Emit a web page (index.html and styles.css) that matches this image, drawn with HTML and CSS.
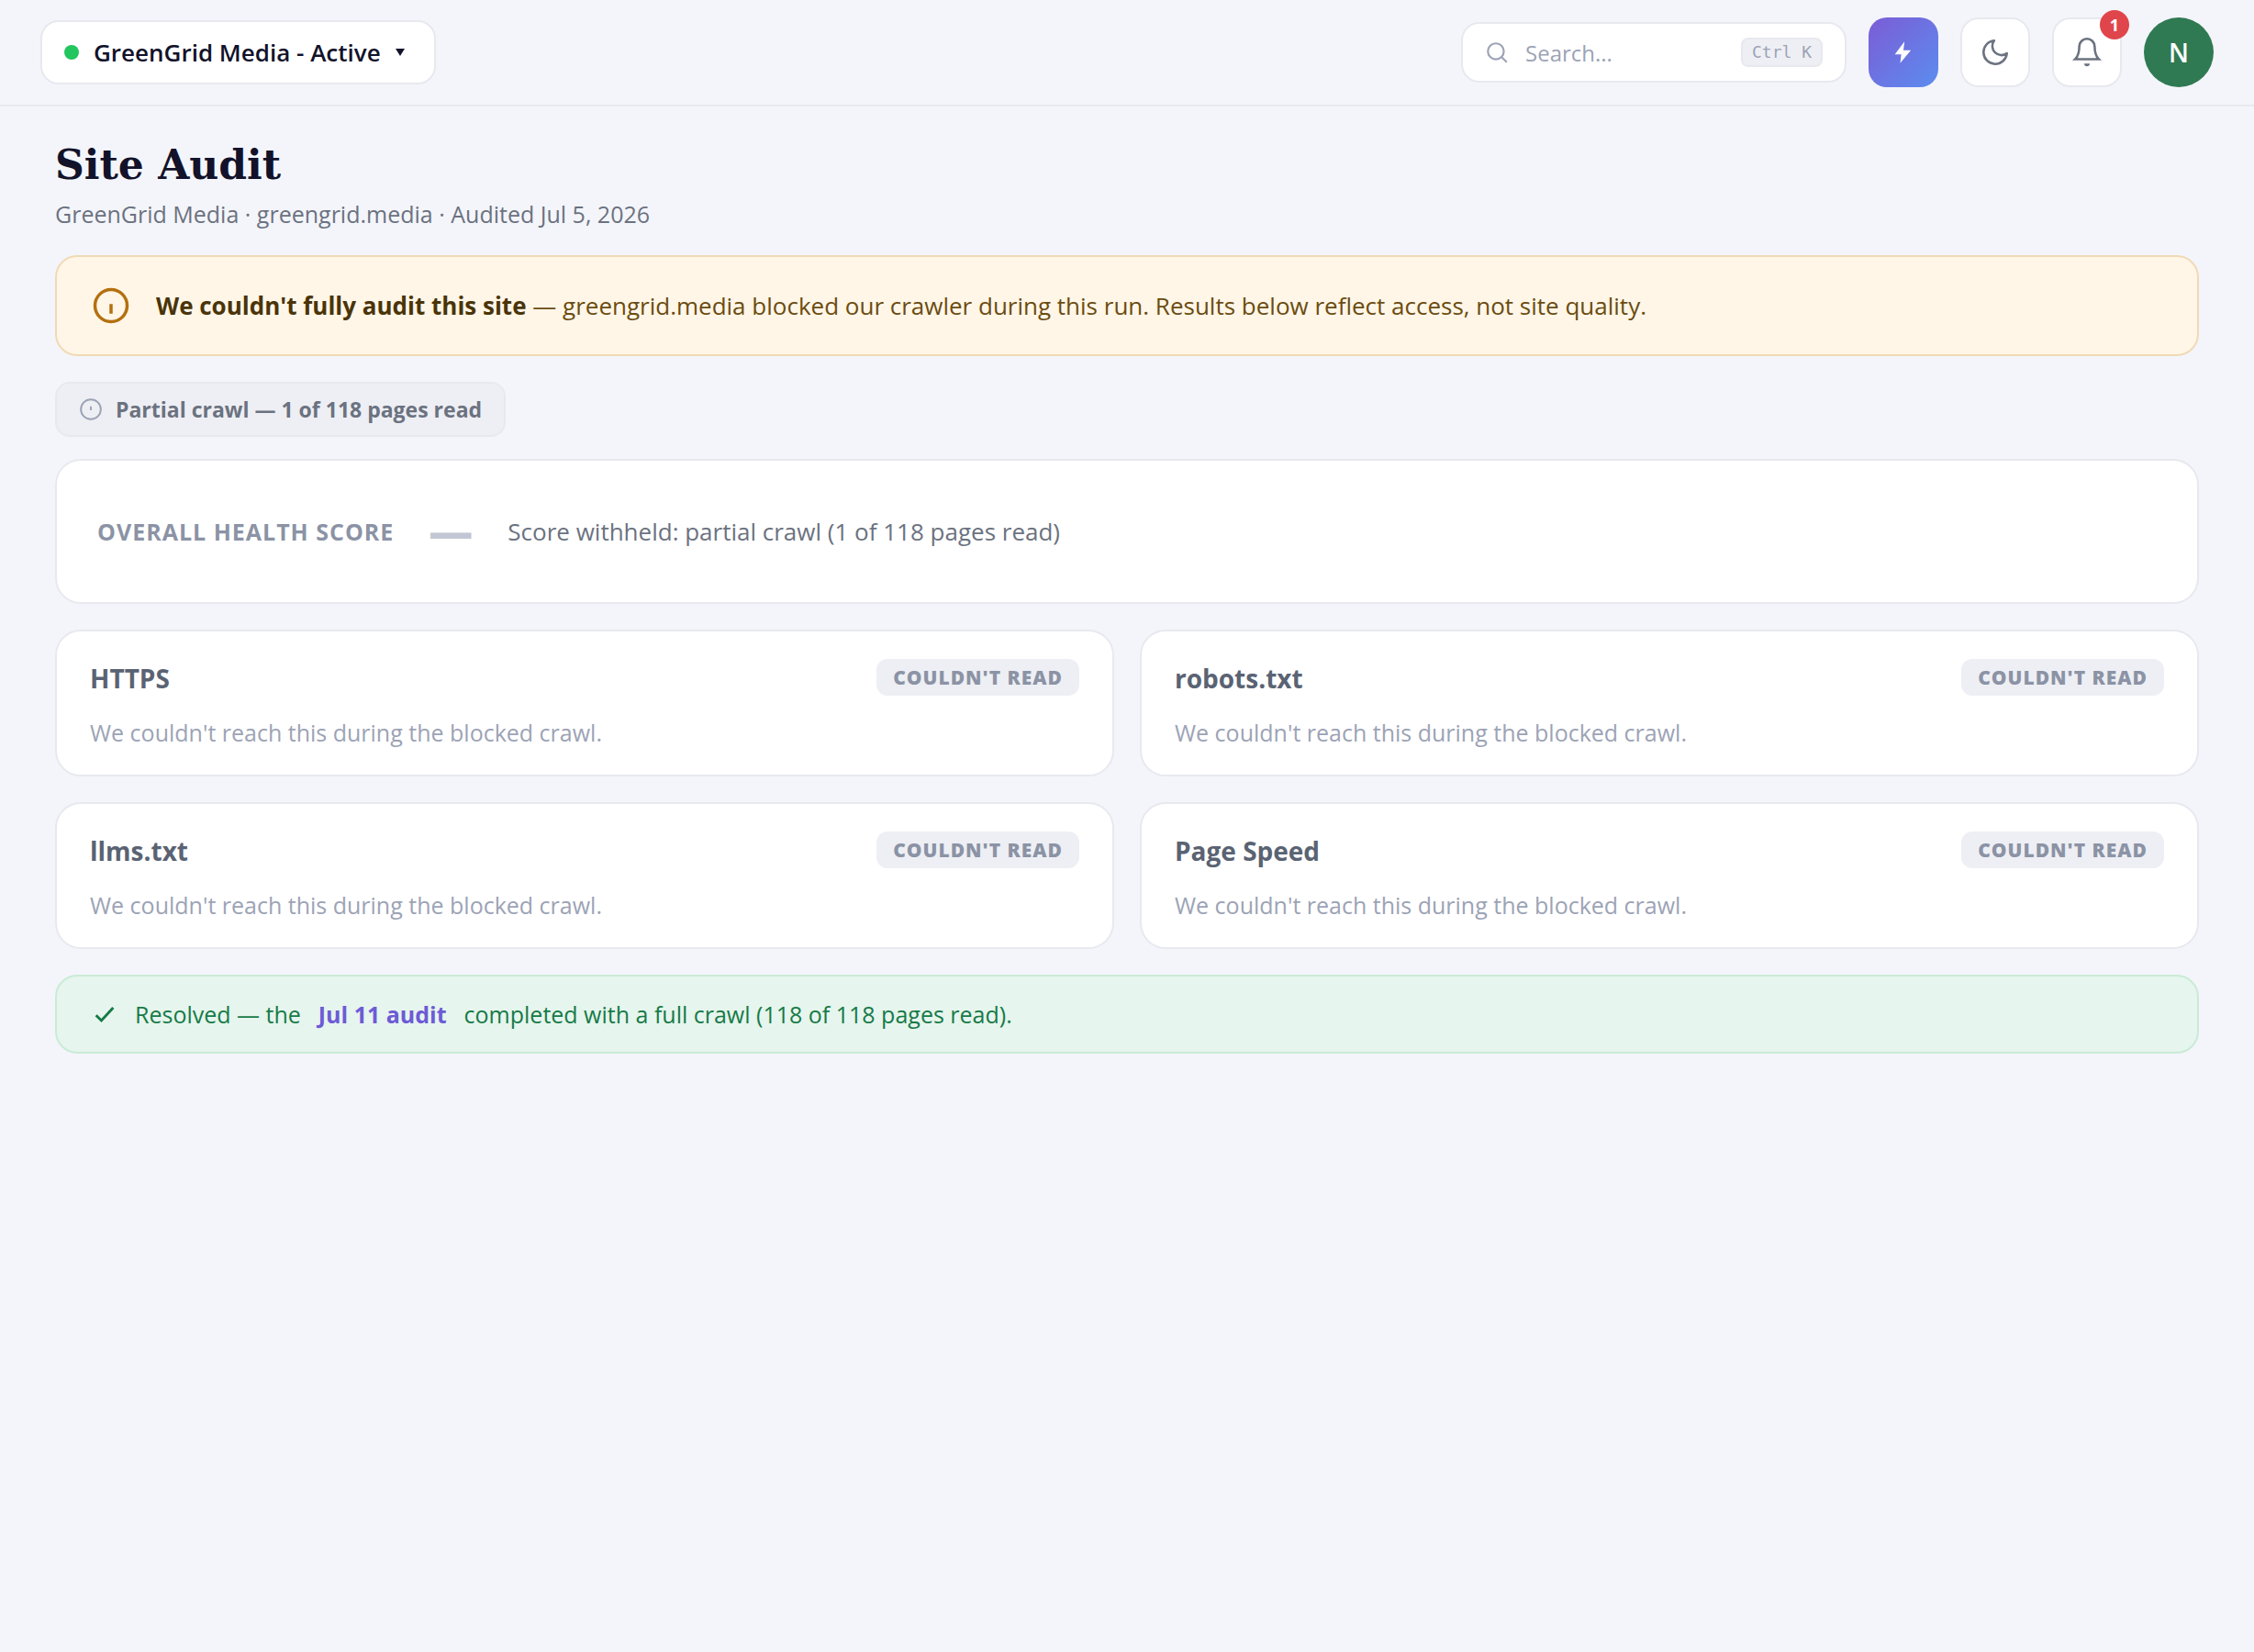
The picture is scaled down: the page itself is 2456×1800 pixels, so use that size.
FILE: index.html
```
<!DOCTYPE html>
<html lang="en">
<head>
    <meta charset="UTF-8">
    <meta name="viewport" content="width=device-width, initial-scale=1">
    <title>Site Audit</title>
    <link rel="stylesheet" href="styles.css">
</head>
<body>
<header class="topbar">
    <button class="switcher" type="button">
        <span class="dot"></span>
        <span>GreenGrid Media - Active</span>
        <svg class="caret" viewBox="0 0 10 10"><path d="M0 1h10L5 9z" fill="currentColor"/></svg>
    </button>

    <div class="tools">
        <label class="search">
            <svg class="search-icon" viewBox="0 0 24 24" fill="none" stroke="currentColor" stroke-width="2">
                <circle cx="11" cy="11" r="8"/>
                <path d="M17 17l5 5"/>
            </svg>
            <input type="text" placeholder="Search..." aria-label="Search">
            <kbd>Ctrl K</kbd>
        </label>
        <button class="tool tool-accent" type="button" aria-label="Quick actions">
            <svg viewBox="0 0 24 24"><path d="M13 2L4 14h6l-1 8 10-12h-7z" fill="currentColor"/></svg>
        </button>
        <button class="tool" type="button" aria-label="Dark mode">
            <svg viewBox="0 0 24 24" fill="none" stroke="currentColor" stroke-width="1.8" stroke-linejoin="round">
                <path d="M21 12.8A9 9 0 1 1 11.2 3 7 7 0 0 0 21 12.8z"/>
            </svg>
        </button>
        <button class="tool tool-bell" type="button" aria-label="Notifications">
            <svg viewBox="0 0 24 24" fill="none" stroke="currentColor" stroke-width="1.7">
                <path d="M12 2.2a5.600 5.600 0 0 0-5.600 5.600c0 5-.9 7.200-3 9.200h17.200c-2.100-2-3-4.200-3-9.200A5.600 5.600 0 0 0 12 2.200z"/>
                <path d="M10 20.200h4a2 2 0 0 1-4 0z" fill="currentColor" stroke="none"/>
            </svg>
            <span class="count">1</span>
        </button>
        <button class="avatar" type="button" aria-label="Account">N</button>
    </div>
</header>

<main class="page">
    <h1>Site Audit</h1>
    <p class="subtitle">GreenGrid Media · greengrid.media · Audited Jul 5, 2026</p>

    <div class="alert">
        <svg class="alert-icon" viewBox="0 0 24 24" fill="none" stroke="currentColor" stroke-width="2">
            <circle cx="12" cy="12" r="10"/>
            <path d="M12 11v6"/>
        </svg>
        <p><strong>We couldn't fully audit this site</strong> — greengrid.media blocked our crawler during this run. Results below reflect access, not site quality.</p>
    </div>

    <div class="crawl-pill">
        <svg class="pill-icon" viewBox="0 0 24 24" fill="none" stroke="currentColor" stroke-width="1.8">
            <circle cx="12" cy="12" r="10"/>
            <path d="M12 9v4"/>
        </svg>
        Partial crawl — 1 of 118 pages read
    </div>

    <section class="score">
        <h2>Overall health score</h2>
        <span class="score-value">—</span>
        <span class="score-note">Score withheld: partial crawl (1 of 118 pages read)</span>
    </section>

    <section class="checks">
        <article class="check">
            <div class="check-head">
                <h3>HTTPS</h3>
                <span class="badge">Couldn't read</span>
            </div>
            <p>We couldn't reach this during the blocked crawl.</p>
        </article>
        <article class="check">
            <div class="check-head">
                <h3>robots.txt</h3>
                <span class="badge">Couldn't read</span>
            </div>
            <p>We couldn't reach this during the blocked crawl.</p>
        </article>
        <article class="check">
            <div class="check-head">
                <h3>llms.txt</h3>
                <span class="badge">Couldn't read</span>
            </div>
            <p>We couldn't reach this during the blocked crawl.</p>
        </article>
        <article class="check">
            <div class="check-head">
                <h3>Page Speed</h3>
                <span class="badge">Couldn't read</span>
            </div>
            <p>We couldn't reach this during the blocked crawl.</p>
        </article>
    </section>

    <div class="resolved">
        <svg class="resolved-icon" viewBox="0 0 24 24" fill="none" stroke="currentColor" stroke-width="2.5">
            <path d="M20 6L9 18l-5-5"/>
        </svg>
        <span>Resolved — the</span>
        <a href="#">Jul 11 audit</a>
        <span>completed with a full crawl (118 of 118 pages read).</span>
    </div>
</main>
</body>
</html>
```
FILE: styles.css
```
:root {
    --bg: #f4f5fa;
    --card: #ffffff;
    --soft: #eeeff4;
    --border: #e8e9ef;
    --text: #12122a;
    --muted: #6b7280;
    --faint: #9ca3b5;
    --label: #8b93a5;
}

* {
    box-sizing: border-box;
}

body {
    margin: 0;
    background: var(--bg);
    color: var(--text);
    font-family: 'Open Sans', 'Noto Sans', sans-serif;
    font-size: 25px;
}

h1, h2, h3, p {
    margin: 0;
}

button {
    font: inherit;
    color: inherit;
    cursor: pointer;
}

.topbar {
    display: flex;
    align-items: center;
    justify-content: space-between;
    padding: 19px 44px;
    border-bottom: 2px solid var(--border);
}

.switcher {
    display: flex;
    align-items: center;
    gap: 16px;
    height: 70px;
    padding: 0 32px 0 24px;
    background: var(--card);
    border: 2px solid var(--border);
    border-radius: 20px;
    font-size: 26px;
    font-weight: 600;
}

.dot {
    width: 16px;
    height: 16px;
    border-radius: 50%;
    background: #22c55e;
}

.caret {
    width: 10px;
    height: 10px;
}

.tools {
    display: flex;
    align-items: center;
    gap: 24px;
}

.search {
    display: flex;
    align-items: center;
    gap: 18px;
    width: 420px;
    height: 66px;
    padding: 0 24px;
    background: var(--card);
    border: 2px solid var(--border);
    border-radius: 20px;
    color: var(--faint);
}

.search-icon {
    flex: none;
    width: 26px;
    height: 26px;
}

.search input {
    flex: 1;
    min-width: 0;
    padding: 0;
    border: 0;
    outline: none;
    background: none;
    font: inherit;
    font-size: 24px;
    color: var(--text);
}

.search input::placeholder {
    color: var(--faint);
}

kbd {
    padding: 0 10px;
    background: var(--soft);
    border: 2px solid var(--border);
    border-radius: 8px;
    font-family: 'DejaVu Sans Mono', monospace;
    font-size: 18px;
    line-height: 28px;
}

.tool {
    position: relative;
    display: flex;
    align-items: center;
    justify-content: center;
    width: 76px;
    height: 76px;
    padding: 0;
    background: var(--card);
    border: 2px solid var(--border);
    border-radius: 20px;
    color: var(--muted);
}

.tool svg {
    width: 34px;
    height: 34px;
}

.tool-bell svg {
    width: 36px;
    height: 36px;
}

.tool-accent {
    border: 0;
    background: linear-gradient(135deg, #7c5cd6, #5b8def);
    color: #ffffff;
}

.tool-accent svg {
    width: 28px;
    height: 28px;
}

.count {
    position: absolute;
    top: -10px;
    right: -10px;
    width: 32px;
    height: 32px;
    border-radius: 50%;
    background: #e0454b;
    color: #ffffff;
    font-size: 18px;
    font-weight: 700;
    line-height: 32px;
    text-align: center;
}

.avatar {
    width: 76px;
    height: 76px;
    padding: 0;
    border: 0;
    border-radius: 50%;
    background: #2f7a52;
    color: #ffffff;
    font-size: 28px;
    font-weight: 600;
}

.page {
    padding: 36px 60px;
}

h1 {
    font-family: Georgia, 'DejaVu Serif', serif;
    font-size: 44px;
    font-weight: 700;
    line-height: 56px;
}

.subtitle {
    margin: 6px 0 26px;
    color: var(--muted);
    line-height: 38px;
}

.alert {
    display: flex;
    align-items: center;
    gap: 28px;
    min-height: 110px;
    padding: 24px 38px;
    background: #fff6e8;
    border: 2px solid #f0dab5;
    border-radius: 24px;
    color: #6b4c10;
    font-size: 26px;
}

.alert strong {
    color: #4a3408;
    font-weight: 700;
}

.alert-icon {
    flex: none;
    width: 42px;
    height: 42px;
    color: #b4700f;
}

.crawl-pill {
    display: flex;
    align-items: center;
    gap: 14px;
    width: fit-content;
    height: 60px;
    margin: 28px 0 24px;
    padding: 0 24px;
    background: var(--soft);
    border: 2px solid var(--border);
    border-radius: 16px;
    color: var(--muted);
    font-size: 23px;
    font-weight: 700;
}

.pill-icon {
    width: 26px;
    height: 26px;
    color: var(--faint);
}

.score {
    display: flex;
    align-items: center;
    gap: 38px;
    min-height: 158px;
    padding: 24px 44px;
    background: var(--card);
    border: 2px solid var(--border);
    border-radius: 28px;
}

.score h2 {
    color: var(--label);
    font-size: 25px;
    font-weight: 700;
    letter-spacing: 1px;
    text-transform: uppercase;
}

.score-value {
    color: #c3c6d4;
    font-size: 48px;
    font-weight: 800;
    line-height: 64px;
}

.score-note {
    color: var(--muted);
    font-size: 26px;
    font-weight: 500;
}

.checks {
    display: grid;
    grid-template-columns: 1fr 1fr;
    gap: 28px;
    margin: 28px 0;
}

.check {
    padding: 30px 36px 28px;
    background: var(--card);
    border: 2px solid var(--border);
    border-radius: 28px;
}

.check-head {
    display: flex;
    align-items: flex-start;
    justify-content: space-between;
    margin-bottom: 20px;
}

.check h3 {
    color: #5a6373;
    font-size: 28px;
    font-weight: 700;
    line-height: 42px;
}

.check p {
    color: var(--faint);
    line-height: 36px;
}

.badge {
    padding: 0 18px;
    background: var(--soft);
    border-radius: 12px;
    color: var(--label);
    font-size: 21px;
    font-weight: 800;
    letter-spacing: 1px;
    line-height: 40px;
    text-transform: uppercase;
}

.resolved {
    display: flex;
    align-items: center;
    gap: 19px;
    min-height: 86px;
    padding: 20px 38px;
    background: #e6f5ed;
    border: 2px solid #c9ebd7;
    border-radius: 24px;
    color: #167a48;
}

.resolved-icon {
    width: 28px;
    height: 28px;
}

.resolved a {
    color: #6d5bd6;
    font-weight: 700;
    text-decoration: none;
}
```
